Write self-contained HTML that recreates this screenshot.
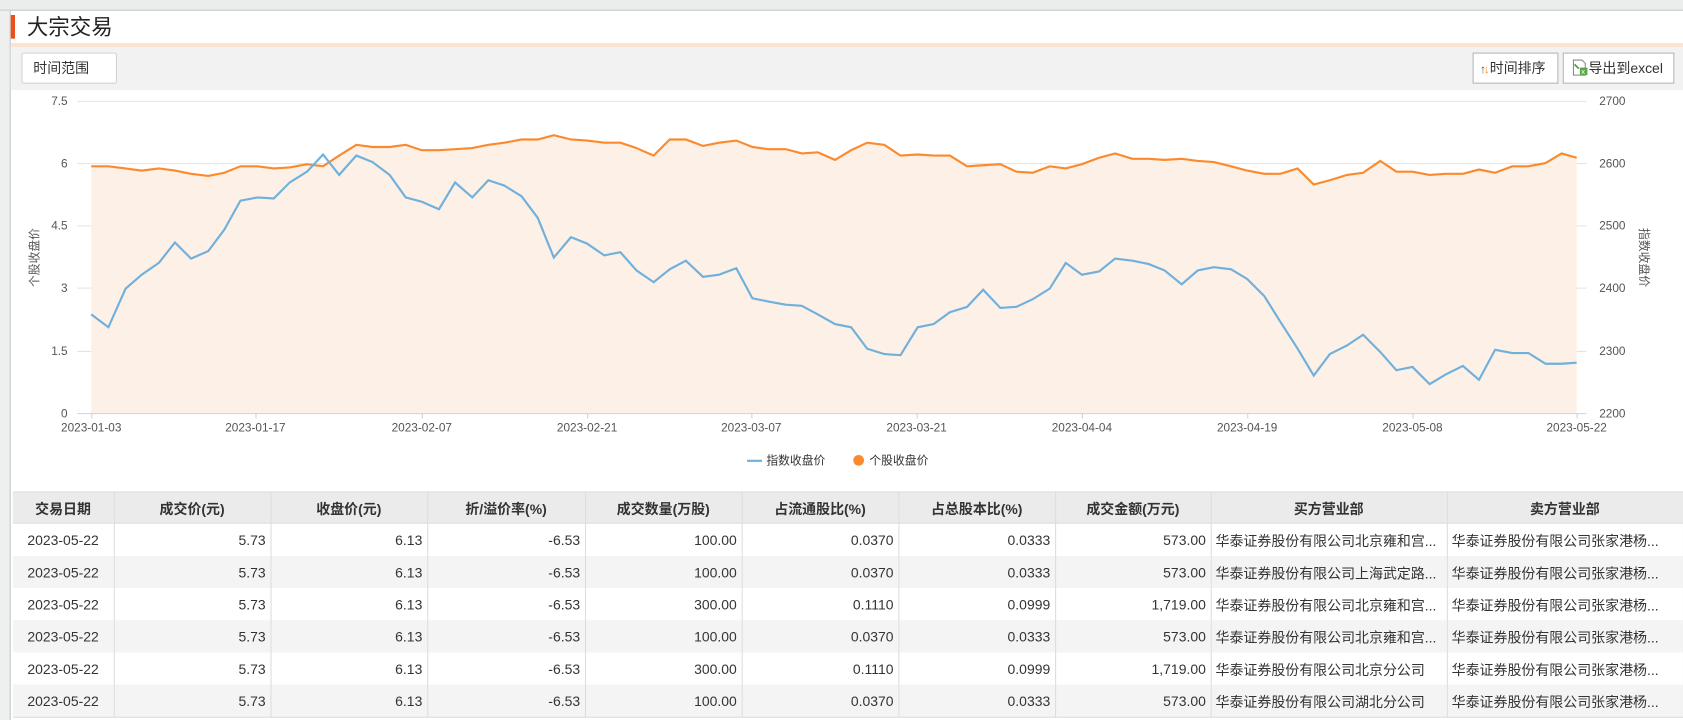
<!DOCTYPE html>
<html><head><meta charset="utf-8">
<style>
html,body{margin:0;padding:0;width:1683px;height:720px;overflow:hidden;background:#fff;}
#w{position:absolute;left:0;top:0;width:1568px;height:671px;transform:scale(1.0733,1.073);transform-origin:0 0;font-family:"Liberation Sans","Noto Sans CJK SC",sans-serif;color:#333;}
.abs{position:absolute;}
.btn{position:absolute;top:49px;height:29px;border:1px solid #c8c8c8;background:#fff;font-size:13px;line-height:27px;box-sizing:border-box;}
table{position:absolute;left:12px;top:458px;width:1556px;border-collapse:collapse;font-size:13px;table-layout:fixed;}
th{height:28px;padding:0;background:#ebebeb;font-weight:bold;color:#333;border-right:1px solid #ddd;border-top:1px solid #ddd;border-bottom:1px solid #ddd;font-size:13px;}
td{height:30px;padding:0 4px;border-right:1px solid #ddd;white-space:nowrap;overflow:hidden;text-overflow:ellipsis;}
tr:last-child td{border-bottom:1px solid #ddd;}
td.r{text-align:right;}
td.c{text-align:center;}
tr.g td{background:#f4f4f4;}
</style></head><body>
<div id="w">
<div class="abs" style="left:0;top:0;width:1568px;height:10px;background:#ebecec;border-bottom:1px solid #c8c8c8;box-sizing:border-box"></div>
<div class="abs" style="left:0;top:10px;width:10px;height:661px;background:#eef0f0;border-right:1px solid #c8c8c8;box-sizing:border-box"></div>
<div class="abs" style="left:10px;width:4px;height:22px;top:14px;background:#e8501c"></div>
<div class="abs" style="left:25px;top:11px;font-size:20px;line-height:30px;color:#222">大宗交易</div>
<div class="abs" style="left:10px;top:40px;width:1558px;height:4px;background:#fde3d3"></div>
<div class="abs" style="left:10px;top:44px;width:1558px;height:40px;background:#f2f2f2"></div>
<div class="btn" style="left:20px;width:89px;padding-left:10px;border-color:#cfd3da;border-radius:2px">时间范围</div>
<div class="btn" style="left:1372px;width:80px;padding-left:6px;border-color:#b5b5b5"><span style="font-size:11px;color:#555">↑</span><span style="font-size:11px;color:#f08a1c;margin-left:-2px">↓</span>时间排序</div>
<div class="btn" style="left:1456px;width:104px;padding-left:7px;border-color:#b5b5b5">
<svg width="16" height="16" viewBox="0 0 16 16" style="vertical-align:-3px"><path d="M2 1h8l3 3v11H2z" fill="#fff" stroke="#888"/><path d="M3 5l4 4" stroke="#4a9a3c" stroke-width="1.5"/><rect x="8" y="8" width="7" height="7" fill="#5aa548"/><text x="9.3" y="14.2" font-size="7" fill="#fff" font-family="Liberation Sans">x</text></svg>导出到excel</div>

<svg class="abs" style="left:0;top:84px" width="1568" height="370" viewBox="0 84 1568 370" font-family="Liberation Sans, Noto Sans CJK SC, sans-serif">
<g stroke="#e3e3e3" stroke-width="1">
<line x1="72" y1="94.5" x2="1478" y2="94.5"/><line x1="72" y1="152.5" x2="1478" y2="152.5"/><line x1="72" y1="210.5" x2="1478" y2="210.5"/><line x1="72" y1="268.5" x2="1478" y2="268.5"/><line x1="72" y1="327.5" x2="1478" y2="327.5"/>
</g>
<polygon fill="#fdf0e6" points="85,385 85,155 101,155 117,157 132,159 148,157 163,159 178,162 194,164 209,161 224,155 240,155 255,157 270,156 286,153 301,155 316,145 332,135 347,137 363,137 378,135 393,140 409,140 424,139 440,138 455,135 470,133 486,130 501,130 516,126 532,130 547,131 563,133 578,133 593,138 609,145 624,130 639,130 655,136 670,133 686,131 701,137 716,139 732,139 747,143 762,142 778,149 793,140 808,133 824,135 839,145 855,144 870,145 885,145 901,155 916,154 932,153 947,160 962,161 978,155 993,157 1008,153 1024,147 1039,143 1055,148 1070,148 1085,149 1101,148 1116,150 1131,151 1147,155 1162,159 1178,162 1193,162 1209,157 1224,172 1239,168 1255,163 1270,161 1286,150 1301,160 1316,160 1332,163 1347,162 1363,162 1378,158 1393,161 1409,155 1424,155 1440,152 1455,143 1469,147 1469,385"/>
<line x1="72" y1="385.5" x2="1478" y2="385.5" stroke="#c9d3e6"/>
<g stroke="#c9d3e6"><line x1="85.5" y1="385" x2="85.5" y2="390"/><line x1="238.5" y1="385" x2="238.5" y2="390"/><line x1="393.5" y1="385" x2="393.5" y2="390"/><line x1="547.5" y1="385" x2="547.5" y2="390"/><line x1="700.5" y1="385" x2="700.5" y2="390"/><line x1="854.5" y1="385" x2="854.5" y2="390"/><line x1="1008.5" y1="385" x2="1008.5" y2="390"/><line x1="1162.5" y1="385" x2="1162.5" y2="390"/><line x1="1316.5" y1="385" x2="1316.5" y2="390"/><line x1="1469.5" y1="385" x2="1469.5" y2="390"/></g>
<polyline fill="none" stroke="#fb8a2e" stroke-width="2" points="85,155 101,155 117,157 132,159 148,157 163,159 178,162 194,164 209,161 224,155 240,155 255,157 270,156 286,153 301,155 316,145 332,135 347,137 363,137 378,135 393,140 409,140 424,139 440,138 455,135 470,133 486,130 501,130 516,126 532,130 547,131 563,133 578,133 593,138 609,145 624,130 639,130 655,136 670,133 686,131 701,137 716,139 732,139 747,143 762,142 778,149 793,140 808,133 824,135 839,145 855,144 870,145 885,145 901,155 916,154 932,153 947,160 962,161 978,155 993,157 1008,153 1024,147 1039,143 1055,148 1070,148 1085,149 1101,148 1116,150 1131,151 1147,155 1162,159 1178,162 1193,162 1209,157 1224,172 1239,168 1255,163 1270,161 1286,150 1301,160 1316,160 1332,163 1347,162 1363,162 1378,158 1393,161 1409,155 1424,155 1440,152 1455,143 1469,147"/>
<polyline fill="none" stroke="#6fb0dc" stroke-width="2" points="85,293 101,305 117,269 132,256 148,245 163,226 178,241 194,234 209,214 224,187 240,184 255,185 270,170 286,160 301,144 316,163 332,145 347,151 363,163 378,184 393,188 409,195 424,170 440,184 455,168 470,173 486,183 501,203 516,240 532,221 547,227 563,238 578,235 593,252 609,263 624,251 639,243 655,258 670,256 686,250 701,278 716,281 732,284 747,285 762,293 778,302 793,305 808,325 824,330 839,331 855,305 870,302 885,291 901,286 916,270 932,287 947,286 962,279 978,269 993,245 1008,256 1024,253 1039,241 1055,243 1070,246 1085,252 1101,265 1116,252 1131,249 1147,251 1162,260 1178,276 1193,300 1209,325 1224,350 1239,330 1255,322 1270,312 1286,328 1301,345 1316,342 1332,358 1347,349 1363,341 1378,354 1393,326 1409,329 1424,329 1440,339 1455,339 1469,338"/>
<g font-size="11" fill="#555" text-anchor="end">
<text x="63" y="98">7.5</text><text x="63" y="156">6</text><text x="63" y="214">4.5</text><text x="63" y="272">3</text><text x="63" y="331">1.5</text><text x="63" y="389">0</text>
</g>
<g font-size="11" fill="#555">
<text x="1490" y="98">2700</text><text x="1490" y="156">2600</text><text x="1490" y="214">2500</text><text x="1490" y="272">2400</text><text x="1490" y="331">2300</text><text x="1490" y="389">2200</text>
</g>
<g font-size="11" fill="#555" text-anchor="middle">
<text x="85" y="402">2023-01-03</text><text x="238" y="402">2023-01-17</text><text x="393" y="402">2023-02-07</text><text x="547" y="402">2023-02-21</text><text x="700" y="402">2023-03-07</text><text x="854" y="402">2023-03-21</text><text x="1008" y="402">2023-04-04</text><text x="1162" y="402">2023-04-19</text><text x="1316" y="402">2023-05-08</text><text x="1469" y="402">2023-05-22</text>
</g>
<text font-size="11" fill="#555" text-anchor="middle" transform="translate(36,240) rotate(-90)">个股收盘价</text>
<text font-size="11" fill="#555" text-anchor="middle" transform="translate(1528,240) rotate(90)">指数收盘价</text>
<line x1="696" y1="429.5" x2="710" y2="429.5" stroke="#6fb0dc" stroke-width="2"/>
<text x="714" y="433" font-size="11" fill="#333">指数收盘价</text>
<circle cx="800" cy="429" r="5" fill="#fb8a2e"/>
<text x="810" y="433" font-size="11" fill="#333">个股收盘价</text>
</svg>

<table>
<colgroup><col style="width:94px"><col style="width:146px"><col style="width:146px"><col style="width:147px"><col style="width:146px"><col style="width:146px"><col style="width:146px"><col style="width:145px"><col style="width:220px"><col style="width:220px"></colgroup>
<tr><th>交易日期</th><th>成交价(元)</th><th>收盘价(元)</th><th>折/溢价率(%)</th><th>成交数量(万股)</th><th>占流通股比(%)</th><th>占总股本比(%)</th><th>成交金额(万元)</th><th>买方营业部</th><th>卖方营业部</th></tr>
<tr><td class="c">2023-05-22</td><td class="r">5.73</td><td class="r">6.13</td><td class="r">-6.53</td><td class="r">100.00</td><td class="r">0.0370</td><td class="r">0.0333</td><td class="r">573.00</td><td>华泰证券股份有限公司北京雍和宫...</td><td>华泰证券股份有限公司张家港杨...</td></tr>
<tr class="g"><td class="c">2023-05-22</td><td class="r">5.73</td><td class="r">6.13</td><td class="r">-6.53</td><td class="r">100.00</td><td class="r">0.0370</td><td class="r">0.0333</td><td class="r">573.00</td><td>华泰证券股份有限公司上海武定路...</td><td>华泰证券股份有限公司张家港杨...</td></tr>
<tr><td class="c">2023-05-22</td><td class="r">5.73</td><td class="r">6.13</td><td class="r">-6.53</td><td class="r">300.00</td><td class="r">0.1110</td><td class="r">0.0999</td><td class="r">1,719.00</td><td>华泰证券股份有限公司北京雍和宫...</td><td>华泰证券股份有限公司张家港杨...</td></tr>
<tr class="g"><td class="c">2023-05-22</td><td class="r">5.73</td><td class="r">6.13</td><td class="r">-6.53</td><td class="r">100.00</td><td class="r">0.0370</td><td class="r">0.0333</td><td class="r">573.00</td><td>华泰证券股份有限公司北京雍和宫...</td><td>华泰证券股份有限公司张家港杨...</td></tr>
<tr><td class="c">2023-05-22</td><td class="r">5.73</td><td class="r">6.13</td><td class="r">-6.53</td><td class="r">300.00</td><td class="r">0.1110</td><td class="r">0.0999</td><td class="r">1,719.00</td><td>华泰证券股份有限公司北京分公司</td><td>华泰证券股份有限公司张家港杨...</td></tr>
<tr class="g"><td class="c">2023-05-22</td><td class="r">5.73</td><td class="r">6.13</td><td class="r">-6.53</td><td class="r">100.00</td><td class="r">0.0370</td><td class="r">0.0333</td><td class="r">573.00</td><td>华泰证券股份有限公司湖北分公司</td><td>华泰证券股份有限公司张家港杨...</td></tr>
</table>
</div>
</body></html>
